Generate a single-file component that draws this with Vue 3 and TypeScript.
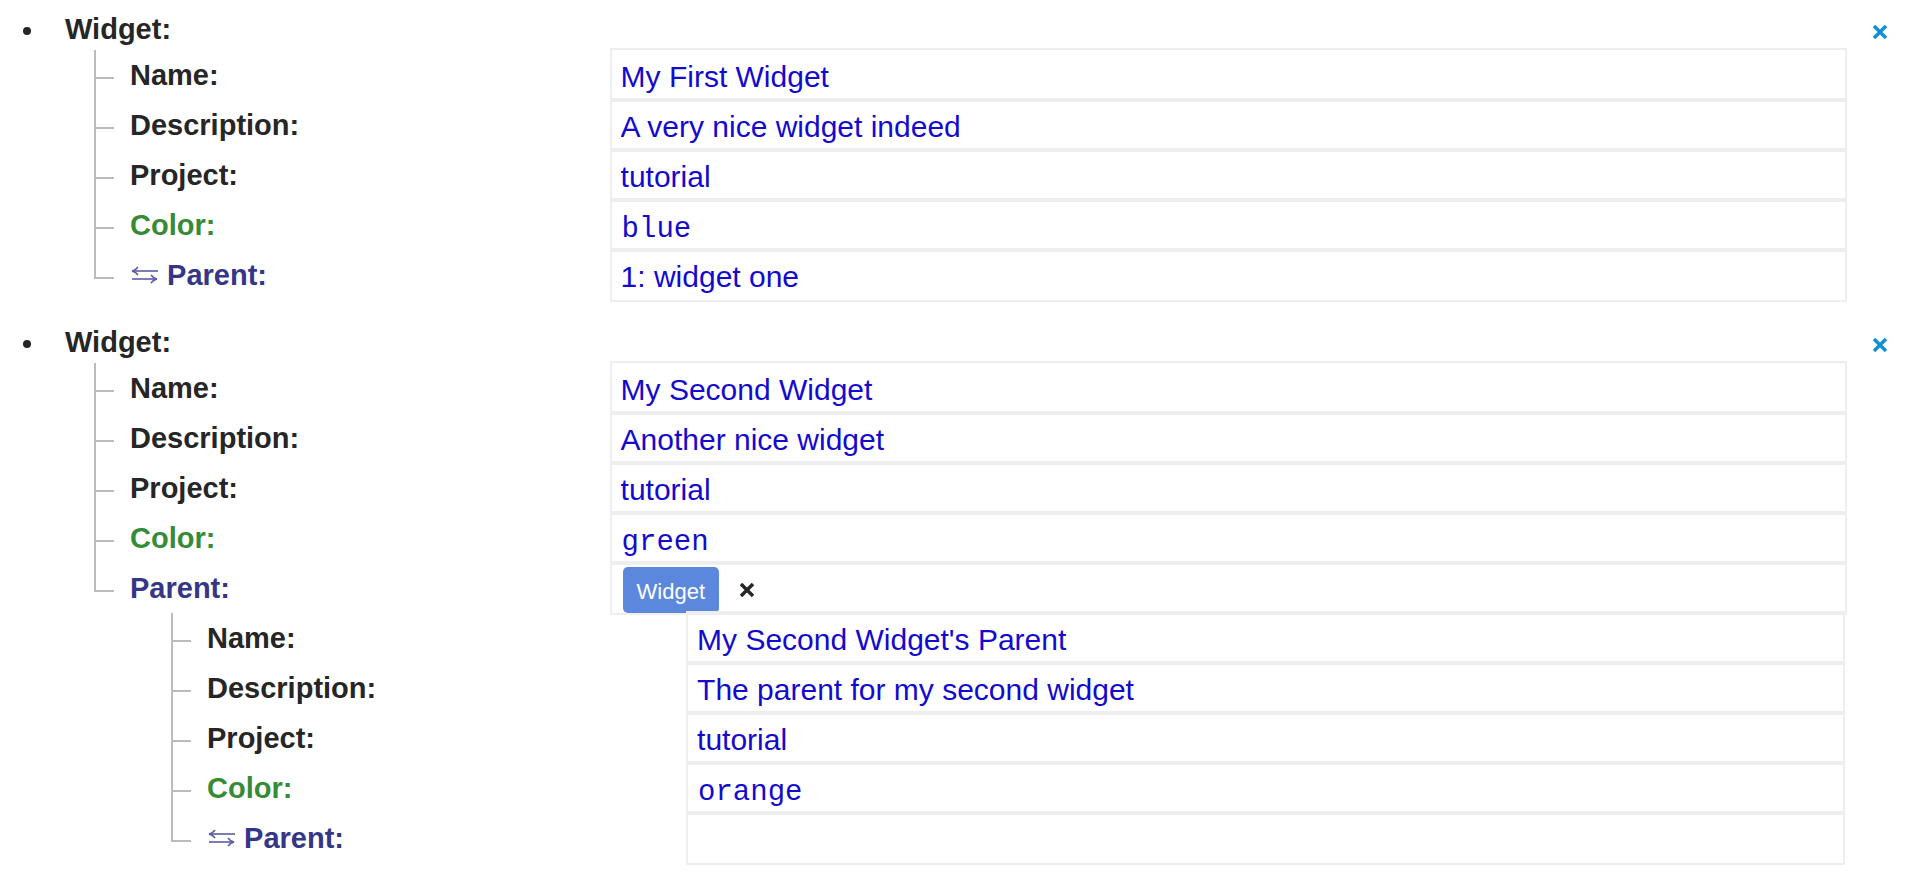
<script setup lang="ts">
import { reactive } from 'vue'

interface Field {
  id: string
  label: string
  value: string
  kind: 'text' | 'code' | 'link' | 'object'
  fields?: Field[]
}

interface Widget {
  id: string
  fields: Field[]
}

const makeFields = (id: string, name: string, description: string, color: string, parent: Field): Field[] => [
  { id: `${id}-name`, label: 'Name:', value: name, kind: 'text' },
  { id: `${id}-description`, label: 'Description:', value: description, kind: 'text' },
  { id: `${id}-project`, label: 'Project:', value: 'tutorial', kind: 'text' },
  { id: `${id}-color`, label: 'Color:', value: color, kind: 'code' },
  parent,
]

const widgets = reactive<Widget[]>([
  {
    id: 'w1',
    fields: makeFields('w1', 'My First Widget', 'A very nice widget indeed', 'blue', {
      id: 'w1-parent', label: 'Parent:', value: '1: widget one', kind: 'link',
    }),
  },
  {
    id: 'w2',
    fields: makeFields('w2', 'My Second Widget', 'Another nice widget', 'green', {
      id: 'w2-parent',
      label: 'Parent:',
      value: 'Widget',
      kind: 'object',
      fields: makeFields('w2p', "My Second Widget's Parent", 'The parent for my second widget', 'orange', {
        id: 'w2p-parent', label: 'Parent:', value: '', kind: 'link',
      }),
    }),
  },
])

// Every visible row, in order, split into one tree per nesting level.
const treesOf = (widget: Widget): Field[][] => {
  const trees: Field[][] = []
  let level: Field[] | undefined = widget.fields
  while (level) {
    trees.push(level)
    level = level[level.length - 1].fields
  }
  return trees
}
</script>

<template>
  <main class="page">
    <ul class="widgets">
      <li v-for="widget in widgets" :key="widget.id" class="widget">
        <header class="head">
          <span class="bullet"></span>
          <h2 class="title">Widget:</h2>
          <button class="remove" type="button" aria-label="Remove widget">
            <svg class="cross" viewBox="0 0 16 16"><path d="M2 2L14 14M14 2L2 14" /></svg>
          </button>
        </header>
        <ul v-for="(tree, depth) in treesOf(widget)" :key="depth" class="tree" :class="{ nested: depth > 0 }">
          <li v-for="field in tree" :key="field.id" class="row">
            <div class="name">
              <span class="stem"></span>
              <label class="label" :class="field.kind" :for="field.id">
                <svg v-if="field.kind === 'link'" class="swap" viewBox="0 0 28 20">
                  <path class="shaft" d="M28 6H3M2 14H26" />
                  <path class="tip" d="M8 2Q6 5 2 6Q6 7 8 10M21 10Q23 13 27 14Q23 15 21 18" />
                </svg>
                {{ field.label }}
              </label>
            </div>
            <div v-if="field.kind === 'object'" class="field choice">
              <button :id="field.id" class="type" type="button">{{ field.value }}</button>
              <button class="clear" type="button" aria-label="Clear parent">
                <svg class="cross" viewBox="0 0 16 16"><path d="M2 2L14 14M14 2L2 14" /></svg>
              </button>
            </div>
            <input v-else :id="field.id" v-model="field.value" class="field" :class="{ mono: field.kind === 'code' }" type="text" />
          </li>
        </ul>
      </li>
    </ul>
  </main>
</template>

<style>
body {
  margin: 0;
  background: #fff;
}
</style>

<style scoped>
.page {
  font-family: "Liberation Sans", Arial, sans-serif;
  font-size: 29px;
  line-height: 34px;
  color: #262626;
}
.page *,
.page *::before,
.page *::after {
  box-sizing: border-box;
}
ul {
  list-style: none;
  margin: 0;
  padding: 0;
}
.widget {
  margin-bottom: 15px;
}
.head {
  display: flex;
  align-items: flex-end;
  padding: 12px 28px 2px 23px;
}
.bullet {
  width: 8px;
  height: 8px;
  margin: 0 34px 11px 0;
  border-radius: 50%;
  background: #262626;
}
.title {
  flex: 1;
  margin: 0;
  font-size: 29px;
  font-weight: bold;
}
button {
  margin: 0;
  border: 0;
  padding: 0;
  background: none;
  font-family: inherit;
  cursor: pointer;
}
.cross {
  display: block;
  width: 16px;
  height: 16px;
  fill: none;
  stroke: currentColor;
  stroke-width: 3.5;
}
.remove {
  padding-bottom: 6px;
  color: #128fd6;
}
.tree {
  margin: 0 69px 0 94px;
}
.tree.nested {
  margin: 0 71px 0 171px;
}
.row {
  display: grid;
  grid-template-columns: 5fr 12fr;
  margin-bottom: -4px;
}
.nested .row {
  grid-template-columns: 4fr 9fr;
}
.name {
  display: flex;
}
.stem {
  display: flex;
  flex-direction: column;
  width: 36px;
}
.stem::before {
  content: "";
  width: 20px;
  height: 31px;
  border: solid #bbb;
  border-width: 0 0 2px 2px;
}
.stem::after {
  content: "";
  flex: 1;
  border-left: 2px solid #bbb;
}
.row:first-child .stem {
  padding-top: 2px;
}
.row:first-child .stem::before {
  height: 29px;
}
.row:last-child .stem::after {
  display: none;
}
.label {
  padding-top: 10px;
  font-weight: bold;
}
.label.code {
  color: #378b37;
}
.label.link,
.label.object {
  color: #363687;
}
.swap {
  width: 28px;
  height: 20px;
  margin-right: 1px;
  fill: none;
}
.shaft {
  stroke: #7c7cba;
  stroke-width: 2;
}
.tip {
  stroke: #5c5ca2;
  stroke-width: 1.5;
}
.field {
  width: 100%;
  min-width: 0;
  height: 54px;
  margin: 0;
  border: 2px solid #eee;
  border-radius: 0;
  padding: 10px 9px 6px;
  background: transparent;
  color: #140acd;
  font-family: inherit;
  font-size: 30px;
  line-height: 34px;
  outline: 0;
}
.field.mono {
  padding: 12px 10px 4px;
  font-family: "Liberation Mono", "Courier New", monospace;
  font-size: 29px;
}
.field.choice {
  display: flex;
  align-items: center;
  gap: 20px;
  padding: 3px 11px 0;
}
.type {
  height: 46px;
  border-radius: 5px;
  padding: 4px 14px 0;
  background: #5b87dc;
  color: #fff;
  font-size: 22px;
  line-height: 28px;
}
.clear {
  color: #262626;
}
</style>
